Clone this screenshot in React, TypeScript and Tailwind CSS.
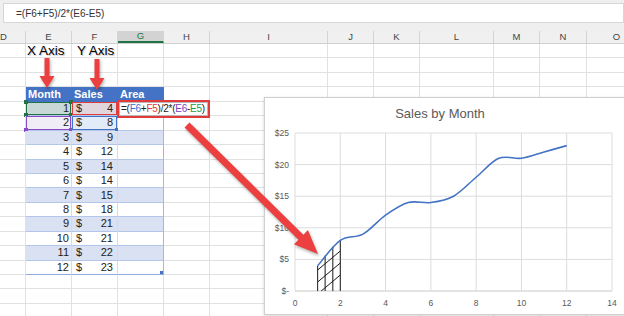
import React from "react";

type Col = { key: string; w: string };

const cols: Col[] = [
  { key: "D", w: "w-[26px]" },
  { key: "E", w: "w-[46px]" },
  { key: "F", w: "w-[46px]" },
  { key: "G", w: "w-[46px]" },
  { key: "H", w: "w-[46px]" },
  { key: "I", w: "w-[118px]" },
  { key: "J", w: "w-[46px]" },
  { key: "K", w: "w-[46px]" },
  { key: "L", w: "w-[74px]" },
  { key: "M", w: "w-[46px]" },
  { key: "N", w: "w-[47px]" },
  { key: "O", w: "w-[60px]" },
];

const sales = [4, 8, 9, 12, 14, 14, 15, 18, 21, 21, 22, 23];
const ROWS = 19;

// chart helpers (coords inside the chart box)
const sx = (x: number) => 30 + x * (317 / 14);
const sy = (v: number) => 193 - v * 6.32;

function smoothPath(pts: number[][]) {
  let d = `M${pts[0][0]},${pts[0][1]}`;
  for (let i = 0; i < pts.length - 1; i++) {
    const p0 = pts[i - 1] ?? pts[i];
    const p1 = pts[i];
    const p2 = pts[i + 1];
    const p3 = pts[i + 2] ?? p2;
    const c1x = p1[0] + (p2[0] - p0[0]) / 6;
    const c1y = p1[1] + (p2[1] - p0[1]) / 6;
    const c2x = p2[0] - (p3[0] - p1[0]) / 6;
    const c2y = p2[1] - (p3[1] - p1[1]) / 6;
    d += ` C${c1x},${c1y} ${c2x},${c2y} ${p2[0]},${p2[1]}`;
  }
  return d;
}

function arrowPoints(s: number[], t: number[], w: number, h: number, l: number) {
  const dx = t[0] - s[0];
  const dy = t[1] - s[1];
  const len = Math.hypot(dx, dy);
  const ux = dx / len;
  const uy = dy / len;
  const nx = -uy;
  const ny = ux;
  const bx = t[0] - ux * l;
  const by = t[1] - uy * l;
  const p = [
    [s[0] + nx * w, s[1] + ny * w],
    [bx + nx * w, by + ny * w],
    [bx + nx * h, by + ny * h],
    [t[0], t[1]],
    [bx - nx * h, by - ny * h],
    [bx - nx * w, by - ny * w],
    [s[0] - nx * w, s[1] - ny * w],
  ];
  return p.map((q) => q.join(",")).join(" ");
}

function FormulaBar() {
  return (
    <div className="h-[31px] bg-[#efefef] pt-[3px] pl-[3px]">
      <div className="h-[20px] bg-white border border-[#d6d6d6] flex items-center pl-[12px] text-[10px] text-[#333]">
        =(F6+F5)/2*(E6-E5)
      </div>
    </div>
  );
}

function ColumnHeaders() {
  return (
    <div className="flex h-[13px] bg-[#f0f0f0] border-b border-[#d0d0d0]">
      {cols.map((c) => (
        <div
          key={c.key}
          className={`${c.w} shrink-0 flex items-center text-[9.5px] leading-none border-r border-[#d4d4d4] ${
            c.key === "D" ? "justify-start" : "justify-center"
          } ${c.key === "G" ? "bg-[#d3d3d3] text-[#217346] border-b-2 border-b-[#217346]" : "text-[#444]"}`}
        >
          {c.key}
        </div>
      ))}
    </div>
  );
}

function RangeBox({ border, fill, corners }: { border: string; fill: string; corners: string[] }) {
  return (
    <div className={`absolute inset-0 border-[1.5px] ${border} pointer-events-none`}>
      {corners.includes("tl") && <div className={`absolute -left-[3px] -top-[3px] w-[4px] h-[4px] ${fill}`} />}
      {corners.includes("tr") && <div className={`absolute -right-[3px] -top-[3px] w-[4px] h-[4px] ${fill}`} />}
      {corners.includes("bl") && <div className={`absolute -left-[3px] -bottom-[3px] w-[4px] h-[4px] ${fill}`} />}
      {corners.includes("br") && <div className={`absolute -right-[3px] -bottom-[3px] w-[4px] h-[4px] ${fill}`} />}
    </div>
  );
}

function FormulaCell() {
  return (
    <div className="absolute left-[-1px] top-[-2px] w-[93px] h-[18px] border-2 border-[#e23b3b] bg-white z-10">
      <div className="h-full border border-[#b8b8b8] flex items-center pl-[1px] text-[10px] tracking-[-0.25px] text-[#222] whitespace-nowrap overflow-hidden">
        <span>=(</span>
        <span className="text-[#3d6fd0]">F6</span>
        <span>+</span>
        <span className="text-[#e03c3c]">F5</span>
        <span>)/2*(</span>
        <span className="text-[#7b3fb8]">E6</span>
        <span>-</span>
        <span className="text-[#1e9a4a]">E5</span>
        <span>)</span>
      </div>
    </div>
  );
}

function Cell({ col, row }: { col: Col; row: number }) {
  const base = `${col.w} h-full shrink-0 relative`;
  const grid = "border-r border-b border-[#e1e1e1]";

  if (row === 0 && (col.key === "E" || col.key === "F")) {
    return (
      <div className={`${base} ${grid} flex items-center ${col.key === "E" ? "pl-[1px]" : "pl-[5px]"}`}>
        <span className="text-[13.5px] leading-none whitespace-nowrap text-black [text-shadow:1px_1px_1px_rgba(0,0,0,0.25)]">
          {col.key === "E" ? "X Axis" : "Y Axis"}
        </span>
      </div>
    );
  }

  const inTable = col.key === "E" || col.key === "F" || col.key === "G";

  if (row === 3 && inTable) {
    return (
      <div className={`${base} bg-[#4472c4] border-r border-[#4472c4] flex items-center pl-[2px] text-[11px] font-bold text-white`}>
        {col.key === "E" ? "Month" : col.key === "F" ? "Sales" : "Area"}
      </div>
    );
  }

  if (row >= 4 && row <= 15 && inTable) {
    const m = row - 3;
    const band = m % 2 === 1 ? "bg-[#d9e1f2]" : "bg-white";
    const last = m === 12;
    let bg = band;
    if (m === 1 && col.key === "E") bg = "bg-[#c8d8d6]";
    if (m === 1 && col.key === "F") bg = "bg-[#e2d6de]";
    if (m === 2 && col.key === "E") bg = "bg-[#f1edf7]";
    if (m === 2 && col.key === "F") bg = "bg-[#e2ebf8]";
    const rb = col.key === "G" ? "border-[#a3b6dc]" : "border-[#d3dbea]";
    const bb = last ? "border-b-[#8ea9db]" : "border-b-[#b4c6e7]";
    return (
      <div className={`${base} ${bg} border-r border-b ${rb} ${bb} text-[11px] leading-none flex items-center`}>
        {col.key === "E" && <span className="ml-auto pr-[2px]">{m}</span>}
        {col.key === "F" && (
          <>
            <span className="pl-[4px]">$</span>
            <span className="ml-auto pr-[4px]">{sales[m - 1]}</span>
          </>
        )}
        {m === 1 && col.key === "E" && <RangeBox border="border-[#217346]" fill="bg-[#217346]" corners={["tl", "tr", "bl", "br"]} />}
        {m === 1 && col.key === "F" && <RangeBox border="border-[#e03c3c]" fill="bg-[#e03c3c]" corners={[]} />}
        {m === 2 && col.key === "E" && <RangeBox border="border-[#8a4cc6]" fill="bg-[#8a4cc6]" corners={["bl", "br"]} />}
        {m === 2 && col.key === "F" && <RangeBox border="border-[#4472c4]" fill="bg-[#4472c4]" corners={["br"]} />}
        {m === 1 && col.key === "G" && <FormulaCell />}
        {last && col.key === "G" && <div className="absolute right-0 bottom-0 w-[3px] h-[3px] bg-[#4472c4]" />}
      </div>
    );
  }

  return <div className={`${base} ${grid}`} />;
}

function Sheet() {
  return (
    <div className="flex flex-col">
      {Array.from({ length: ROWS }).map((_, r) => (
        <div key={r} className="flex h-[14.45px]">
          {cols.map((c) => (
            <Cell key={c.key} col={c} row={r} />
          ))}
        </div>
      ))}
    </div>
  );
}

function Chart() {
  const pts = sales.map((v, i) => [sx(i + 1), sy(v)]);
  const hx = [1, 1.33, 1.67, 2];
  const hv = [4, 5.6, 7, 8];
  const clip = [
    ...hx.map((x, i) => `${sx(x)},${sy(hv[i])}`),
    `${sx(2)},${sy(0)}`,
    `${sx(1)},${sy(0)}`,
  ].join(" ");
  const diag = [160, 172, 184, 196];
  return (
    <div className="absolute left-[264px] top-[97px] w-[362px] h-[218px] bg-white border border-[#d0d0d0] shadow-[0_1px_3px_rgba(0,0,0,0.18)]">
      <svg width="360" height="216" className="block font-['Liberation_Sans',Arial,sans-serif]">
        <text x="175" y="20" textAnchor="middle" fontSize="13" fill="#595959">
          Sales by Month
        </text>
        {[0, 5, 10, 15, 20, 25].map((v) => (
          <g key={v}>
            <line x1={sx(0)} x2={sx(14)} y1={sy(v)} y2={sy(v)} stroke={v === 0 ? "#c8c8c8" : "#dcdcdc"} strokeWidth="1" />
            <text x="24" y={sy(v) + 3} textAnchor="end" fontSize="8.5" fill="#595959">
              {v === 0 ? "$-" : `$${v}`}
            </text>
          </g>
        ))}
        {[0, 2, 4, 6, 8, 10, 12, 14].map((x) => (
          <g key={x}>
            <line x1={sx(x)} x2={sx(x)} y1={sy(25)} y2={sy(0)} stroke="#dcdcdc" strokeWidth="1" />
            <text x={sx(x)} y="208" textAnchor="middle" fontSize="8.5" fill="#595959">
              {x}
            </text>
          </g>
        ))}
        <defs>
          <clipPath id="hatch">
            <polygon points={clip} />
          </clipPath>
        </defs>
        <g stroke="#1a1a1a" strokeWidth="1" fill="none">
          {hx.map((x, i) => (
            <line key={x} x1={sx(x)} x2={sx(x)} y1={sy(hv[i])} y2={sy(0)} />
          ))}
          <g clipPath="url(#hatch)">
            {diag.map((b) => (
              <line key={b} x1={sx(1)} y1={b} x2={sx(2)} y2={b - 19} />
            ))}
          </g>
        </g>
        <path d={smoothPath(pts)} fill="none" stroke="#4472c4" strokeWidth="1.6" />
      </svg>
    </div>
  );
}

function Arrows() {
  return (
    <svg
      width="624"
      height="316"
      className="absolute left-0 top-0 pointer-events-none [filter:drop-shadow(1px_2px_1.5px_rgba(0,0,0,0.3))]"
    >
      <polygon points={arrowPoints([47, 58], [47, 88], 2.5, 7.5, 12)} fill="#ec3f3f" />
      <polygon points={arrowPoints([97, 59], [97, 90], 2.5, 7.5, 12)} fill="#ec3f3f" />
      <polygon points={arrowPoints([187, 125], [318, 254], 3.5, 10, 24)} fill="#ec3f3f" />
    </svg>
  );
}

export default function App() {
  return (
    <div className="relative w-[624px] h-[316px] overflow-hidden bg-white font-['Liberation_Sans',Arial,sans-serif] text-[#222]">
      <FormulaBar />
      <ColumnHeaders />
      <Sheet />
      <Chart />
      <Arrows />
    </div>
  );
}
